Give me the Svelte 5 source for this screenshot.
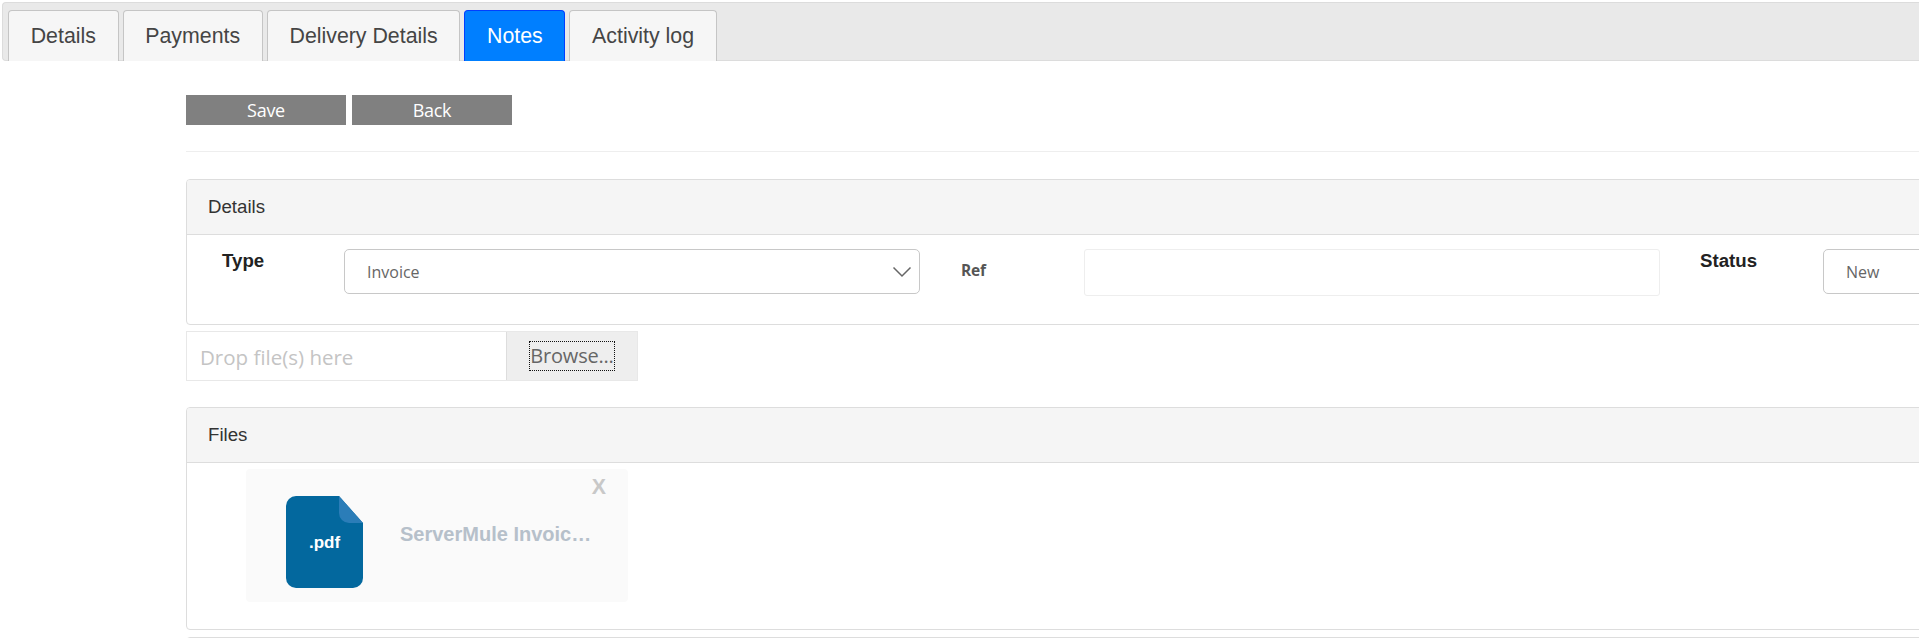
<script>
  const tabs = ['Details', 'Payments', 'Delivery Details', 'Notes', 'Activity log'];
  let active = 'Notes';
</script>

<div class="page">
  <nav class="tabstrip">
    {#each tabs as tab}
      <button class="tab" class:active={tab === active} onclick={() => (active = tab)}>{tab}</button>
    {/each}
  </nav>

  <main class="content">
    <div class="actions">
      <button class="action">Save</button>
      <button class="action">Back</button>
    </div>
    <hr class="rule" />

    <section class="panel details">
      <header class="panel-head">Details</header>
      <div class="fields">
        <span class="label">Type</span>
        <div class="select type">
          <span>Invoice</span>
          <svg class="chevron" width="20" height="12" viewBox="0 0 20 12" aria-hidden="true">
            <path d="M1.5 1.5 L10 10 L18.5 1.5" fill="none" stroke="#666" stroke-width="1.5" />
          </svg>
        </div>
        <span class="label small">Ref</span>
        <input class="ref" type="text" />
        <span class="label">Status</span>
        <div class="select status"><span>New</span></div>
      </div>
    </section>

    <div class="dropzone">
      <span class="drop-text">Drop file(s) here</span>
      <div class="browse"><span class="focus">Browse...</span></div>
    </div>

    <section class="panel files">
      <header class="panel-head">Files</header>
      <div class="files-body">
        <div class="file-card">
          <span class="remove">X</span>
          <div class="file-icon">
            <svg width="77" height="92" viewBox="0 0 77 92" aria-hidden="true">
              <path d="M10 0 H53 L77 27 V82 A10 10 0 0 1 67 92 H10 A10 10 0 0 1 0 82 V10 A10 10 0 0 1 10 0 Z" fill="#03689e" />
              <path d="M53 0 L77 27 H63 A10 10 0 0 1 53 17 Z" fill="#2b7db8" />
            </svg>
            <span class="ext">.pdf</span>
          </div>
          <span class="file-name">ServerMule Invoic…</span>
        </div>
      </div>
    </section>

    <section class="panel next"></section>
  </main>
</div>

<style>
  :global(body) {
    overflow: hidden;
    background: #fff;
  }

  .page {
    width: 1919px;
    height: 638px;
    overflow: hidden;
    font-family: "Liberation Sans", Arial, sans-serif;
    color: #333;
  }

  .tabstrip {
    display: flex;
    gap: 4px;
    box-sizing: border-box;
    height: 59px;
    margin: 2px 0 0 2px;
    padding: 7px 0 0 5px;
    background: #e9e9e9;
    border: 1px solid #dcdcdc;
    border-radius: 4px 0 0 4px;
    border-right: none;
  }

  .tab {
    box-sizing: border-box;
    height: 51px;
    padding: 0 21.7px;
    font: 21.33px "Liberation Sans", Arial, sans-serif;
    color: #454545;
    background: #f6f6f6;
    border: 1px solid #c5c5c5;
    border-bottom: none;
    border-radius: 4px 4px 0 0;
    cursor: pointer;
  }

  .tab.active {
    color: #fff;
    background: #007fff;
    border-color: #003eff;
  }

  .content {
    padding-left: 186px;
    width: 1800px;
  }

  .actions {
    display: flex;
    gap: 6px;
    margin-top: 34px;
  }

  .action {
    width: 160px;
    height: 30px;
    padding: 0;
    font: 18px "Open Sans", sans-serif;
    letter-spacing: -0.3px;
    color: #fff;
    background: #808080;
    border: none;
  }

  .rule {
    height: 1px;
    margin: 26px 0 27px;
    background: #eee;
    border: none;
  }

  .panel {
    box-sizing: border-box;
    background: #fff;
    border: 1px solid #ddd;
    border-radius: 4px;
  }

  .panel-head {
    box-sizing: border-box;
    height: 55px;
    padding: 0 21px;
    display: flex;
    align-items: center;
    font-size: 18.67px;
    color: #333;
    background: #f5f5f5;
    border-bottom: 1px solid #ddd;
    border-radius: 3px 3px 0 0;
  }

  .details {
    height: 146px;
  }

  .fields {
    display: grid;
    grid-template-columns: 35px 122px 576px 41px 123px 576px 40px 56px 67px 180px;
    padding-top: 14px;
  }

  .fields > :nth-child(1) { grid-column: 2; }
  .fields > :nth-child(2) { grid-column: 3; }
  .fields > :nth-child(3) { grid-column: 5; }
  .fields > :nth-child(4) { grid-column: 6; }
  .fields > :nth-child(5) { grid-column: 8; }
  .fields > :nth-child(6) { grid-column: 10; }

  .label {
    font-size: 18.67px;
    font-weight: 700;
    line-height: 24px;
    color: #222;
  }

  .label.small {
    align-self: center;
    margin-top: -5px;
    font: 700 15.5px "Open Sans", sans-serif;
    letter-spacing: -0.2px;
    color: #555;
  }

  .select {
    position: relative;
    box-sizing: border-box;
    height: 45px;
    padding-left: 22px;
    display: flex;
    align-items: center;
    font: 16px "Open Sans", sans-serif;
    color: #666;
    background: #fff;
    border: 1px solid #c8c8c8;
    border-radius: 5px;
  }

  .chevron {
    position: absolute;
    right: 7px;
    top: 16px;
  }

  .ref {
    box-sizing: border-box;
    height: 47px;
    width: 100%;
    background: #fff;
    border: 1px solid #eee;
    border-radius: 3px;
  }

  .dropzone {
    display: flex;
    box-sizing: border-box;
    width: 452px;
    height: 50px;
    margin: 6px 0 26px;
    border: 1px solid #e8e8e8;
    font-family: "Open Sans", sans-serif;
  }

  .drop-text {
    box-sizing: border-box;
    width: 319px;
    padding-left: 13px;
    line-height: 50px;
    font-size: 20.5px;
    color: #c4c4c4;
  }

  .browse {
    flex: 1;
    display: flex;
    align-items: center;
    justify-content: center;
    background: #eee;
    border-left: 1px solid #ddd;
  }

  .focus {
    font-size: 20px;
    line-height: 28px;
    letter-spacing: -0.2px;
    color: #666;
    outline: 1px dotted #111;
  }

  .files {
    height: 223px;
  }

  .files-body {
    padding: 6px 0 0 59px;
  }

  .file-card {
    position: relative;
    box-sizing: border-box;
    display: flex;
    width: 382px;
    height: 133px;
    padding: 27px 0 0 40px;
    background: #fafafa;
    border-radius: 4px;
  }

  .remove {
    position: absolute;
    top: 6px;
    right: 22px;
    font-size: 21.33px;
    font-weight: 700;
    color: #c8c8c8;
  }

  .file-icon {
    position: relative;
    width: 77px;
    height: 92px;
    flex: none;
  }

  .file-icon svg {
    display: block;
  }

  .ext {
    position: absolute;
    left: 0;
    right: 0;
    top: 37px;
    text-align: center;
    font-size: 17px;
    font-weight: 700;
    color: #fff;
  }

  .file-name {
    margin: 27px 0 0 37px;
    white-space: nowrap;
    font-size: 20px;
    font-weight: 700;
    color: #b6c0ca;
  }

  .next {
    height: 40px;
    margin-top: 7px;
  }
</style>
